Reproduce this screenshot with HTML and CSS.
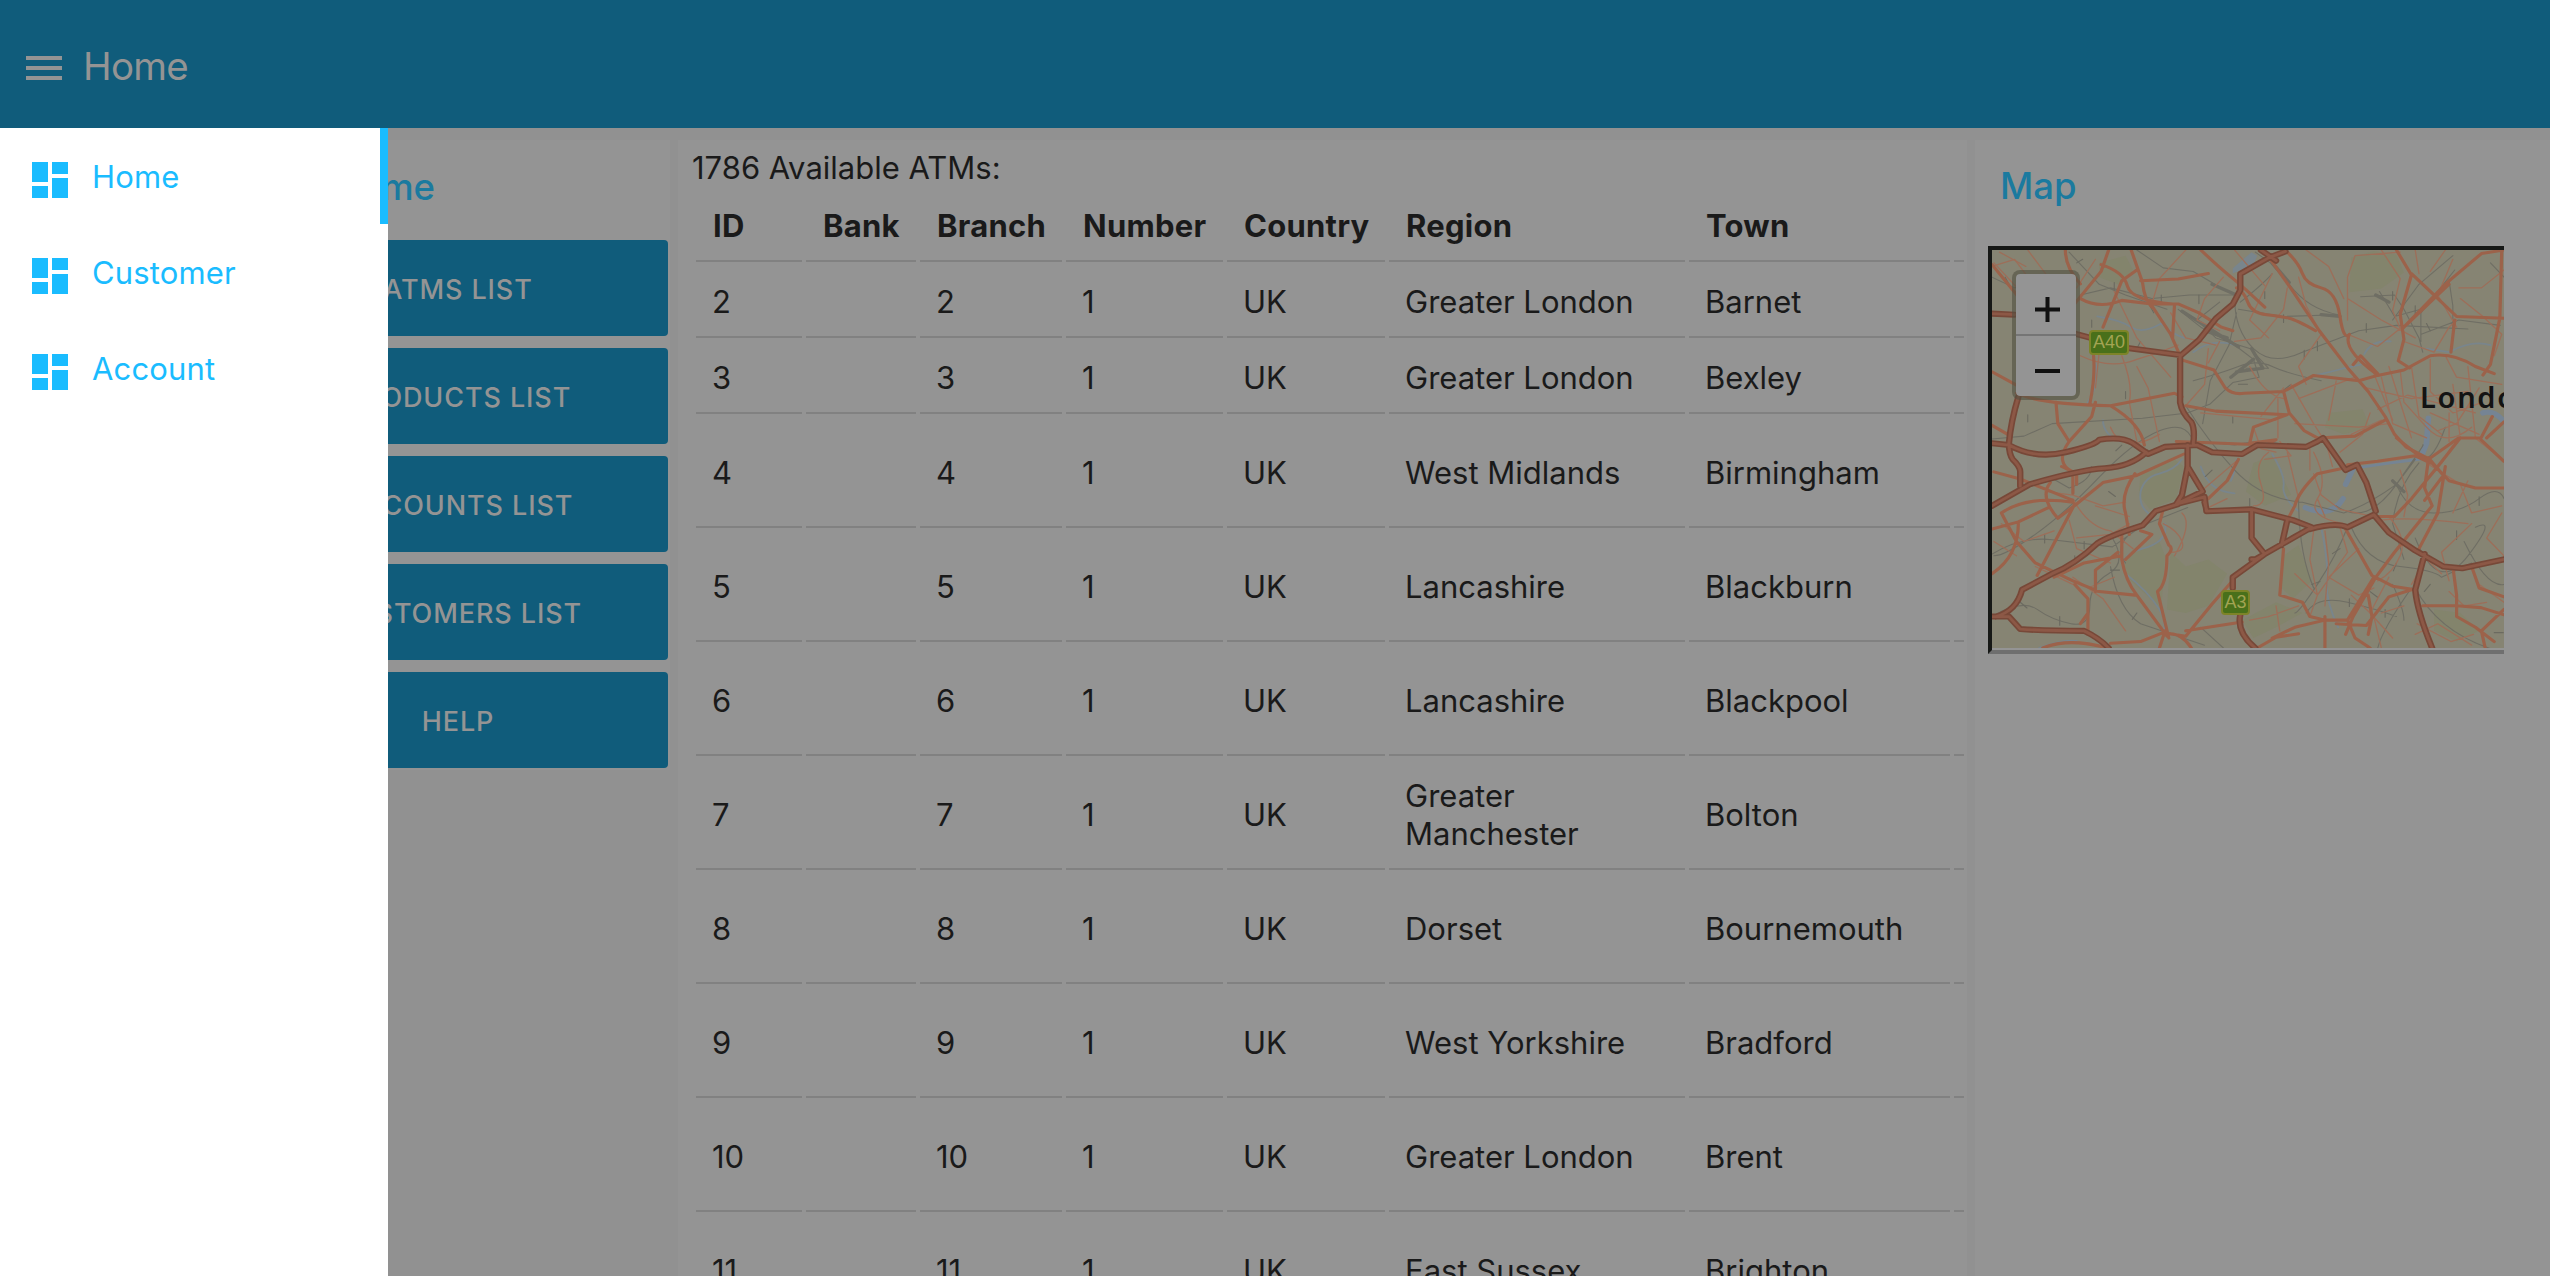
FILE: index.html
```html
<!DOCTYPE html>
<html lang="en">
<head>
<meta charset="utf-8">
<title>Home</title>
<link rel="stylesheet" href="styles.css">
</head>
<body>
<header class="toolbar">
  <svg class="menu-icon" viewBox="0 0 36 26"><path d="M0 1h36v4H0zM0 11h36v4H0zM0 21h36v4H0z"/></svg>
  <h1 class="toolbar-title">Home</h1>
</header>
<div class="shell">
  <nav class="drawer">
    <a class="nav-item active"><svg class="nav-icon" viewBox="3 3 18 18"><path d="M3 13h8V3H3v10zm0 8h8v-6H3v6zm10 0h8V11h-8v10zm0-18v6h8V3h-8z"/></svg><span>Home</span></a>
    <a class="nav-item"><svg class="nav-icon" viewBox="3 3 18 18"><path d="M3 13h8V3H3v10zm0 8h8v-6H3v6zm10 0h8V11h-8v10zm0-18v6h8V3h-8z"/></svg><span>Customer</span></a>
    <a class="nav-item"><svg class="nav-icon" viewBox="3 3 18 18"><path d="M3 13h8V3H3v10zm0 8h8v-6H3v6zm10 0h8V11h-8v10zm0-18v6h8V3h-8z"/></svg><span>Account</span></a>
  </nav>
  <main class="content">
    <section class="panel actions">
      <h2 class="panel-title">Home</h2>
      <button class="btn">ATMS LIST</button>
      <button class="btn">PRODUCTS LIST</button>
      <button class="btn">ACCOUNTS LIST</button>
      <button class="btn">CUSTOMERS LIST</button>
      <button class="btn">HELP</button>
    </section>
    <section class="panel atms">
      <p class="count">1786 Available ATMs:</p>
      <table class="atm-table">
        <colgroup><col class="c-id"><col class="c-bank"><col class="c-branch"><col class="c-number"><col class="c-country"><col class="c-region"><col class="c-town"><col class="c-more"></colgroup>
        <thead><tr><th>ID</th><th>Bank</th><th>Branch</th><th>Number</th><th>Country</th><th>Region</th><th>Town</th><th></th></tr></thead>
        <tbody>
          <tr><td>2</td><td></td><td>2</td><td>1</td><td>UK</td><td>Greater London</td><td>Barnet</td><td></td></tr>
          <tr><td>3</td><td></td><td>3</td><td>1</td><td>UK</td><td>Greater London</td><td>Bexley</td><td></td></tr>
          <tr class="tall"><td>4</td><td></td><td>4</td><td>1</td><td>UK</td><td>West Midlands</td><td>Birmingham</td><td></td></tr>
          <tr class="tall"><td>5</td><td></td><td>5</td><td>1</td><td>UK</td><td>Lancashire</td><td>Blackburn</td><td></td></tr>
          <tr class="tall"><td>6</td><td></td><td>6</td><td>1</td><td>UK</td><td>Lancashire</td><td>Blackpool</td><td></td></tr>
          <tr class="tall"><td>7</td><td></td><td>7</td><td>1</td><td>UK</td><td>Greater Manchester</td><td>Bolton</td><td></td></tr>
          <tr class="tall"><td>8</td><td></td><td>8</td><td>1</td><td>UK</td><td>Dorset</td><td>Bournemouth</td><td></td></tr>
          <tr class="tall"><td>9</td><td></td><td>9</td><td>1</td><td>UK</td><td>West Yorkshire</td><td>Bradford</td><td></td></tr>
          <tr class="tall"><td>10</td><td></td><td>10</td><td>1</td><td>UK</td><td>Greater London</td><td>Brent</td><td></td></tr>
          <tr class="tall"><td>11</td><td></td><td>11</td><td>1</td><td>UK</td><td>East Sussex</td><td>Brighton</td><td></td></tr>
        </tbody>
      </table>
    </section>
    <section class="panel map-panel">
      <h2 class="panel-title">Map</h2>
      <div class="map-frame">
        <div class="map">
          <svg class="map-art" viewBox="85 364 1361 1114" preserveAspectRatio="none">
            <defs>
              <path id="trunk" d="M865 368l-45 18-75 45 0 45-20 40-45 40-45 60-50 45 0 130q5 30 30 55 10 20 5 60M800 364l40 30M85 542l60 3M305 598l50 14M445 638l140 20M155 775q-20 70-25 130 0 30 10 45 20 20 20 35l0 40M85 905l45 5q70 40 150 20t90-35 q60-10 90 10l40 30 45-20 85 -5 40 20 80 5 40-25 130 5 30-15 15-10 60 90 30-15 25 50 25 80M85 1080l100-60q130-40 200-45t110-45M605 910l0 60-15 80-15 25M605 970l40 70-70 35 75-20 5 40 120-5 110 30 50 20-50 30-100 60-10 0M655 1090l-5-20M580 1075l-60 20-35 40q-90 30-120 50-60 60-120 85l-80 45q-15 60-70 75M85 1390l45 0 30 35q70 5 170 5 40 20 65 48M775 1095l0 75 35 45-85 65 0 30M870 1120l-15 70M930 1145q70-20 100-5l70-35 40 50 70 50 75 45 50 5 110-25M1235 1215l-25 100q5 60 45 163M745 1385q-10 50 40 93"/>
            </defs>
            <g class="park">
              <path d="M1040 385l60-18 60 10 20 50-60 45-85 10z"/>
              <path d="M480 990l90-40 25 20-20 90-70 30-30-40z"/>
              <path d="M560 1210l40 40 60-20 50 40-50 90-60 20-50-10z"/>
              <path d="M440 1220l90-40 15 40-10 150-40-40-60-60z"/>
              <path d="M780 960l50-20 50 110-70 30-50-40z"/>
              <path d="M860 1220l40-30 35 100-50 50-30-30z"/>
              <path d="M750 1400l90-50 70 30-70 40-60 30z"/>
              <path d="M980 820l90-10 20 50-70 20-50-20z"/>
              <path d="M1260 1370l70 10 50 50-60 30-60-30z"/>
              <path d="M370 400l70-20 20 40-40 40-50-20z"/>
            </g>
            <g class="water">
              <path d="M725 415l50-45 15 10-10 25-55 25z" class="lake"/>
              <path d="M590 950q-20 30-60 40t-50 50q-5 40 20 60M545 1130q10 50-60 70t-45 70q60 50 90 100t-5 110M640 970q20 70 90 75M735 950q-5 40-15 60M830 935q35 60 30 90t40 70M365 550q60 10 90 30t80-10q30 30 60 40M620 650q50-40 110-20M360 680q10 60-20 110M380 840q0 40 45 60M210 1478q60-25 100-20M1075 655q20-40 70-35M940 715q50-10 80-20l45-10M1240 640l60 10q60-35 110-20M960 1140q20 100 15 150t30 130"/>
              <path class="river" d="M918 1085q70 30 100-25M1025 1020l20-45M1225 945l15-40 5-70M1390 820q30-10 56 25"/>
              <path class="river thin" d="M1045 975l100-15 75-10"/>
            </g>
            <g class="rail">
              <path d="M85 440l60 30 60-20M290 370l80 90 70 30 110 40M470 364l70 50 80 10 80 50 30 15M320 490l80-20 110 30 100-10 120 0M580 530l60 50 90 50 50 40 15 50-70 15-60 60-60 25-120 15-240 15-75 35-105 10M620 730q70-20 120-40t90 0 130 40M735 540l-20 90-50 100-20 120M690 510l-60 50 50 50 90 30M730 500q0 90 50 140t130 10l150-60 100-15 190 10M745 510q60-50 85-80M825 400l50 60q50 70 130 85M740 530l120 20 145-5M785 370l40 30M1065 495l90-5 25 40 40 80 10 40M1150 560l70-100 90-80M1115 480l40 70 70-20M1436 575l-110-15-100 40M1225 620l0-80 90-120M600 800q60 100 130 180t180 90l110 30q60-20 140-80l50-70M620 900q-20-60-90-30t-160 130-170 160-110 60M350 970q0 40-60 60l-50-30M85 1215q80-50 160-40t160 20l80-60 120-50M85 1390q80-50 120-20t90 40 50-50 50-90 10-100M400 1250q20 120 80 160l170 60M640 1420l60 58M640 900l90 10q80-20 130 0M900 1060q0 150 40 250M1030 1140q-30 80-80 160t-60 80M1040 1140q40 100 130 110t110 30l80-40M1000 1080q80 60 160-60t70-110M1160 1020q30 80 100 80t120-40 66 0M1210 1170q60 160 140 50t20-80M920 1380q30-50 110-30t130 40M1200 1310q-80 120-90 170M1210 1310q60 120 200 170M1340 1180q60 130 106 120M1290 860q-30 90-60 90M1220 960q-60 70-70 170l30 100M1300 450l10 70 0 60M1410 400l36 40M1150 1300q30 70 30 100M780 650l40 45-60 0M450 1160q-40 40-10 80"/>
              <path class="yard" d="M590 535l60 40 90 60M650 590l60 20M670 460l65 30M735 705l70-10-30-55M720 720l60-50M830 400l45 55M960 545l50 5M1150 1010l30 30M1105 490l35 20"/>
            </g>
            <path class="rail-tick" d="M120 440l10 20M170 580l0 20M535 490v22M635 490v24M505 520l10 20M310 400l16-10M410 455v20M470 640l10-20M440 760v20M180 825v20M350 560v20M810 480v20M915 645v24M950 620v26M1080 570v24M1210 520v24M860 545v22M1250 590l-10-20M1320 1150v24M1380 1055v24M1090 1320l20 16M1250 1300l-16 20M1010 1200l-20 14M225 1160v24M160 1350l18 16M265 1390v24M395 1040l18 14M670 980l-18 18M770 1060v20M330 1180v20M400 1260h24M470 1380l-12 18M1035 1340v22M1130 1370v22M880 740l-20 16M1150 480v24M430 910l-16 16M1160 1240l-8 22M1420 1435h24M305 1240v-20M935 1300l22-8M725 830v18M740 740h24"/>
            <g class="minor">
              <path d="M85 410l60-20 50 70 40 60M180 364l50 70 60 100M310 470l50-80M310 440l-20 70M410 480l60 130 90 110M370 650l-10 100M430 660q30 80 20 130l20 110M320 660q80 40 150 10l60-20 50-20M470 690l30 60 30 150M660 640l-10 100-50 60M690 620l-30 60M700 440l-50 60-20 60 60 30M560 540l40 70 80 20M730 364l80 100M870 470l-10 60-60 80-70 10M830 430l-60 130 50 50M900 440l20 80 40 80-60 90 20 50M1030 560l0-120 20-60 120-10M1020 500l-40-90-60-46M1120 364l50 80-20 90 20 50-60 50-70-30M1030 500l90 60 90 50M1290 364l-40 60M1220 430l-10-66M1310 390l-40 100 50 90M1446 420l-60 50-60 0M1330 500l60 50 50 50-20 60M1180 620l80 30 40-70 20-20M1250 670l0 90 60 60 80-30M1290 660l30 60 120 20M1170 700l10 90 60 70M1120 720l30 130 90 40M1200 690l20 140 60 50M1100 710l50 130M1080 750l120 30 150-20M1110 810l80-40 180 50M1140 690l60 200M1310 740l20 150M1350 690l20 200 70 60M1380 750l-60 100-50 20M1240 860q50 60 120 0M1250 820l130 60M1300 820l0 80M880 740l60 110 30 50M900 780l150-60M890 850l170 10 80-10M980 840l20-110M1010 930l60-50 20-60M970 890l20 80M1040 880l80-40M1080 750l50 80M930 920l0 60M640 820l200 20M860 750l-60 80M770 690q40 80 90 90M845 780l0 110M850 900l30 40-70 10"/>
              <path d="M820 930q-40 30-20 90t-20 60M870 930l30 130M940 930q40 80 10 130t70 70M1100 1110l-90-20-50-40-20-60M950 1060l20 50M1140 1110q50 60 30 110t-60 70M1120 1120q80-10 230 10M1240 960l90 60 30 80 80-20M1360 1130l-80 80 20 80M1180 1110l10-60-20-70M1440 1100l-40 70 46 50M1350 1010l-40 90M1280 960l30-50M1010 1140l20 70-80 120-60-60M940 1150l-10 80 20 100-20 60M970 1150l10 90-10 120M1060 1200l-80 80 80 50 40-20M1140 1280l-50 100 60 70M1040 1330l60 60 20 88M900 1360l-80 30-50 10M840 1360l10 70M1200 1300l40-70 40 40M1215 1410l90 50 60-20M1300 1320l40 40 60-10M1210 1440l60-30 90 60M1120 1380l60-20M1380 1300l66 50M300 1060q40 80 100 90l60 50M230 1040l70 10 80 30 60-10M290 1120l20 80 90 40M310 1170l90-10 50-30M110 1130l60 50 80-30M150 1220l-60-40M300 1280l80 60 60 90M340 1310l70-30M200 1250l100 50M540 1130q40 20 50 50t-30 30M590 1100q30 30-20 120M360 1080l90 30M650 1090l60-30M740 950l-100 90M780 860l20 60 40 10M400 860q30 80 130 20M90 400l80 90 50 10M105 370l70 40M600 364l-70 80-20 70"/>
            </g>
            <g class="primary">
              <path d="M85 405l70 90M395 364l-20 60-70 90M280 364q0 50 40 95M375 405q60 20 70 60t120 50M455 364l30 90q5 50 25 70M320 500q50 30 110 5l80 10M430 450l-50 130M430 450l40-30M480 450l100-5 80-15M640 364q50 50 80 75t90 85M510 515l70 0 55 25 60 40 30 10M510 520l50 80 25 60M570 520l-5 90M735 470q20 10 30 40t50 35 60 10 70 35"/>
              <path d="M825 390l60 90 70 110 80 110 50 60 45 70 25 50 30 35 55 30M870 370q30 30 40 60t50 40 50 80 25 50q-20 40 70 110M1110 710l-45-50-20 25M1160 364l40 70-30 110 10 70-15 60 30 20M1200 430l50 50 70 70 126 5M1446 364l-60 10-90 80-120 130M1300 460l-110 110M1440 364l-5 190-25 130-20 30M1315 560l-10 90M585 670l90 30 30 50q20 20 50 15l105-5 80-45 120 15 50-15 70-15 70-40q60-10 120 30l50 20M860 760l15 60 40 50 35 20M600 800l80 15 190 10-90 35-10 45 70-10-25 15-240-10M950 890l100-5 80-45M940 900l20-10"/>
              <path d="M1160 890l60 50 25 10 80-60 60 0 30-60M1385 895l60 60M1400 890l46-45M1245 950l55 60 70 20 76 0M1245 950l-10 80 20 50-100 130-50 70-60 110-20 50M1290 970l-20 130-50 100M1250 960l-40-20-100 15-80 10M1245 945l40 50-50 70M1330 890l-60 80-70 90-45 50-50 0M1040 970l-90 20q-50 50-60 90l-20 40M860 1200l-10 130 60 20 20 40 40 10M1025 1145l70 130 55 30 60 10M1100 1280l-70 120M1230 1360l90 0 65 5 61 20M1310 1250l10 80 0 60 50 30 50 40M1360 1250l20 60 66 25M1446 1370l-60 60 10 48M1000 1410l80 5 60-80 60-20M1085 1330l10 60-10 50M970 1390v88M830 1450l60-30 80-20 60 0 20 50 40 28M790 1478l50-30 60-10"/>
              <path d="M85 545l60 0M85 705l70 40M355 660q5 60-10 135M150 765q60 30 250 35l170-35 20 10M400 800q80 50 90 110M255 790l5 60 30 50 60-70 10-40M85 855l50 30M290 900q-40 60 10 85l0 60M270 970l40 20 0 30M90 985l70 20 70 30 70 30M240 1015q-30 40 20 100l50-40 70-60 90-20 125-60M465 990q-40 60-25 110l10 60M305 1075l-100 200M110 1100q70-50 190-30M110 1100l40 80 50 60 100 50 70 30 95 10M85 1145l70-20 80-40M155 1130q0 90-70 140M250 1280l80-40 100-20M305 1300l35 40 0 40-20 30M360 1320l0-60 60-50M430 1160l0 70q10 60 40 100l80 115M340 1380l0 60M540 1090l-10 40 25 60q15 10-5 30 0 80-25 100l30 130M545 1440q40-10 70 38M400 1465l80-5 60-25 60 10 70-90 50-60M600 1430l90-15 60-10M545 1430l-15 48M220 1478q70-30 170 0M480 1150l30 10-70 70M740 950l-30 60-50 50"/>
            </g>
            <use href="#trunk" class="trunk"/>
            <use href="#trunk" class="trunk-core"/>
          </svg>
          <span class="shield a40">A40</span>
          <span class="shield a3">A3</span>
          <span class="city">London</span>
          <div class="zoom">
            <svg viewBox="0 0 60 60" class="zoom-btn"><path d="M19 35.500h25M31.500 23v25"/></svg>
            <svg viewBox="0 0 60 60" class="zoom-btn zoom-out"><path d="M19 35h25"/></svg>
          </div>
        </div>
      </div>
    </section>
  </main>
</div>
</body>
</html>
```
FILE: styles.css
```css
* { box-sizing: border-box; }
body {
  margin: 0;
  width: 2550px;
  height: 1276px;
  overflow: hidden;
  display: flex;
  flex-direction: column;
  background: #919191;
  color: #1a1a1a;
  font: 400 31px/38px Inter, "Liberation Sans", sans-serif;
}
h1, h2, p { margin: 0; font-weight: 400; }

.toolbar {
  flex: none;
  height: 128px;
  padding: 4px 26px 0;
  display: flex;
  align-items: center;
  gap: 21px;
  background: #105c7b;
  color: #949494;
}
.menu-icon { width: 36px; height: 26px; fill: #949494; margin-top: 4px; }
.toolbar-title { font-size: 38.500px; line-height: 48px; letter-spacing: -.7px; margin-top: -1px; }

.shell { flex: 1; min-height: 0; display: flex; }
.drawer { flex: none; width: 388px; background: #fff; }
.nav-item {
  height: 96px;
  padding: 2px 32px 0;
  display: flex;
  align-items: center;
  gap: 24px;
  color: #1abcff;
  letter-spacing: .15px;
}
.nav-item.active { border-right: 8px solid #1abcff; }
.nav-icon { width: 36px; height: 36px; margin-top: 6px; fill: #1abcff; }

.content {
  flex: 1;
  min-width: 0;
  display: flex;
  align-items: flex-start;
  gap: 8px;
  padding-top: 12px;
}
.panel { background: #949494; }
.actions {
  width: 282px;
  height: 630px;
  padding-right: 2px;
  display: flex;
  flex-direction: column;
  gap: 12px;
  overflow: hidden;
}
.panel-title { color: #1b7a9f; font-size: 36.500px; font-weight: 450; line-height: 48px; }
.actions .panel-title {
  width: 47px;
  height: 88px;
  padding-top: 23px;
  display: flex;
  justify-content: flex-end;
}
.btn {
  flex: none;
  width: 420px;
  height: 96px;
  margin-left: -140px;
  padding: 3px 0 0;
  border: 0;
  border-radius: 4px;
  background: #105c7b;
  color: #949494;
  font: 450 27px/38px Inter, sans-serif;
  letter-spacing: .9px;
}

.atms {
  width: 1289px;
  height: 1136px;
  padding: 9px 3px 0 14px;
  overflow: hidden;
}
.atm-table {
  table-layout: fixed;
  width: 1276px;
  margin-top: -1px;
  border-collapse: separate;
  border-spacing: 4px;
}
.c-id { width: 106px; }
.c-bank { width: 110px; }
.c-branch { width: 142px; }
.c-number { width: 157px; }
.c-country { width: 158px; }
.c-region { width: 296px; }
.c-town { width: 261px; }
.c-more { width: 10px; }
th, td {
  height: 72px;
  padding: 17px 0 15px 16px;
  border-bottom: 2px solid #818181;
  text-align: left;
  vertical-align: middle;
  white-space: nowrap;
}
th { font-weight: 700; letter-spacing: .25px; padding-left: 17px; }
td:nth-child(6) { padding-right: 20px; white-space: normal; }
th:last-child, td:last-child { padding: 0; }
.tall td { height: 110px; }

.map-panel { flex: 1; height: 1136px; padding-left: 13px; }
.map-panel .panel-title { padding: 22px 0 0 12px; height: 106px; }
.map-frame {
  width: 516px;
  height: 408px;
  border: 4px solid #161816;
  border-right: 0;
  border-bottom-color: #6f6f6f;
}
.map {
  position: relative;
  height: 398px;
  overflow: hidden;
  background: #868473;
}
.map-art { display: block; width: 512px; height: 398px; fill: none; stroke-linecap: round; stroke-linejoin: round; }
.park { fill: #83846c; }
.water { stroke: #79858c; stroke-width: 5; }
.lake { fill: #79858c; stroke: none; }
.river { stroke: #758494; stroke-width: 15; }
.thin { stroke-width: 8; }
.rail { stroke: #6f6e64; stroke-width: 3; }
.yard { stroke-width: 9; }
.rail-tick { stroke: #6b6a60; stroke-width: 3; }
.minor { stroke: #9d6e59; stroke-width: 3.500; }
.primary { stroke: #9c624a; stroke-width: 8.500; }
.trunk { stroke: #774838; stroke-width: 17; }
.trunk-core { stroke: #8c5846; stroke-width: 8; }
.city {
  position: absolute;
  left: 428px;
  top: 127px;
  color: #131313;
  font: 600 29px/40px "Noto Sans", sans-serif;
  letter-spacing: 1.700px;
}
.shield {
  position: absolute;
  height: 25px;
  border: 2px solid #7d8428;
  border-radius: 4px;
  background: #49701a;
  color: #a3a453;
  font: 400 18px/21px "Liberation Sans", sans-serif;
  text-align: center;
}
.a40 { left: 97px; top: 80px; width: 40px; }
.a3 { left: 229px; top: 340px; width: 29px; }
.zoom {
  position: absolute;
  left: 20px;
  top: 20px;
  width: 68px;
  height: 130px;
  border: 4px solid rgba(82, 80, 65, .6);
  border-radius: 8px;
  background: #949494;
  background-clip: padding-box;
}
.zoom-btn { display: block; width: 60px; height: 60px; fill: none; stroke: #111; stroke-width: 4; }
.zoom-out { height: 62px; border-top: 2px solid #757575; }
```
